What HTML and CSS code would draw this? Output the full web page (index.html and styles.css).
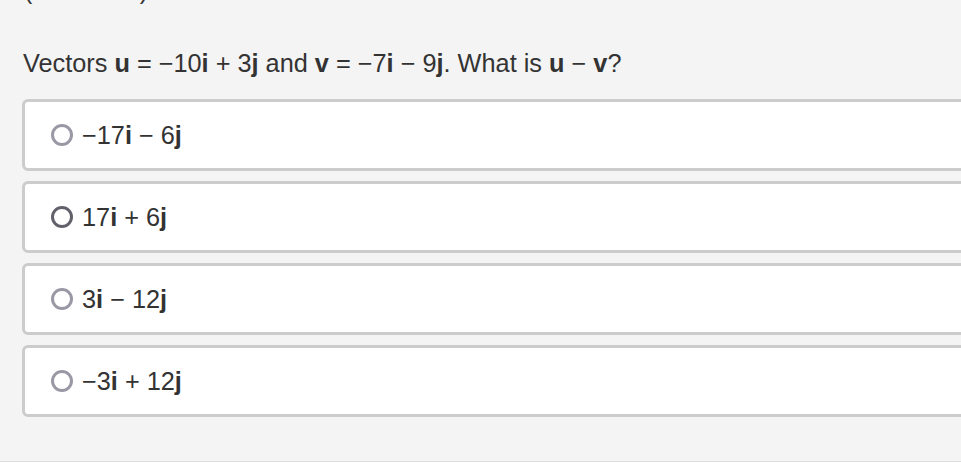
FILE: index.html
```html
<!DOCTYPE html>
<html lang="en">
<head>
<meta charset="utf-8">
<title>Vector subtraction</title>
<link rel="stylesheet" href="styles.css">
</head>
<body>
<div class="page">
  <div class="top"><span>(</span><span>)</span></div>
  <p class="question">Vectors <b>u</b> = −10<b>i</b> + 3<b>j</b> and <b>v</b> = −7<b>i</b> − 9<b>j</b>. What is <b>u</b> − <b>v</b>?</p>
  <div class="options">
    <label class="option"><span class="radio"></span><span class="text">−17<b>i</b> − 6<b>j</b></span></label>
    <label class="option"><span class="radio radio-dark"></span><span class="text">17<b>i</b> + 6<b>j</b></span></label>
    <label class="option"><span class="radio"></span><span class="text">3<b>i</b> − 12<b>j</b></span></label>
    <label class="option"><span class="radio"></span><span class="text">−3<b>i</b> + 12<b>j</b></span></label>
  </div>
</div>
</body>
</html>
```
FILE: styles.css
```css
html, body {
  margin: 0;
  padding: 0;
}
body {
  background: #f4f4f4;
  font-family: "Liberation Sans", Arial, sans-serif;
  color: #333333;
  overflow: hidden;
  height: 462px;
}
.page {
  display: flow-root;
  box-sizing: border-box;
  height: 462px;
  border-bottom: 1px solid #dedede;
  padding-left: 22px;
}
.top {
  display: flex;
  justify-content: space-between;
  width: 124px;
  margin-top: -22px;
  margin-left: 2px;
  height: 24px;
  font-size: 25px;
  line-height: 24px;
}
.question {
  margin: 47px 0 0 1px;
  font-size: 25.3px;
  line-height: 28px;
  height: 28px;
}
.question b, .text b {
  font-weight: bold;
}
.options {
  display: flex;
  flex-direction: column;
  gap: 10px;
  margin-top: 22px;
  margin-right: -30px;
}
.option {
  box-sizing: border-box;
  height: 72px;
  display: flex;
  align-items: center;
  background: #ffffff;
  border: 3px solid #cccccc;
  border-radius: 6px;
  padding-left: 26px;
  font-size: 25.3px;
}
.radio {
  box-sizing: border-box;
  width: 22px;
  height: 22px;
  border: 3px solid #9a98a4;
  border-radius: 50%;
  flex: none;
  margin-right: 9px;
}
.radio-dark {
  border-color: #62606b;
}
.text {
  line-height: 28px;
}
```
